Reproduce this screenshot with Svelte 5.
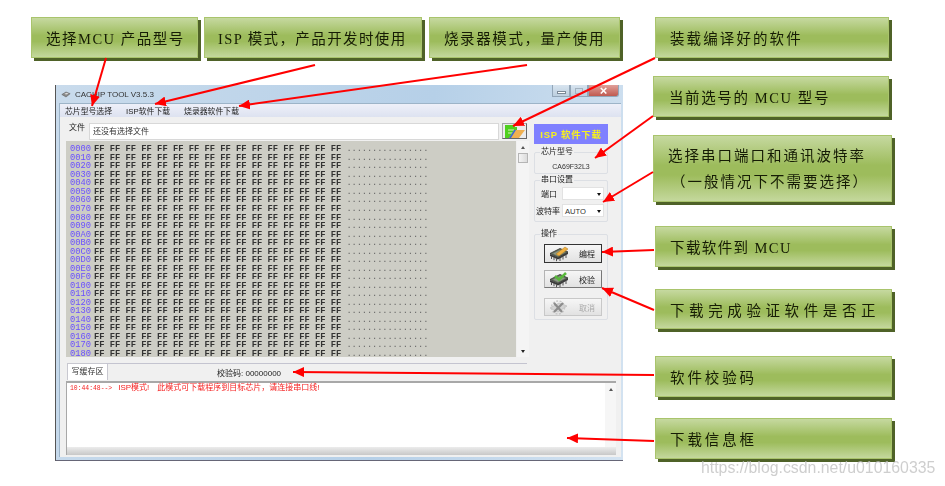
<script lang="ts">
  // Annotated screenshot of the ISP tool: a window on a free canvas with callouts and arrows around it.
  const callouts = [
    { x: 31, y: 17, w: 167, h: 41, px: 14, ls: 1.5, lines: ["选择MCU 产品型号"] },
    { x: 204, y: 17, w: 218, h: 41, px: 13, ls: 1.4, lines: ["ISP 模式，产品开发时使用"] },
    { x: 429, y: 17, w: 191, h: 41, px: 14, ls: 1.6, lines: ["烧录器模式，量产使用"] },
    { x: 655, y: 17, w: 234, h: 41, px: 14, ls: 2.1, lines: ["装载编译好的软件"] },
    { x: 653, y: 76, w: 236, h: 41, px: 15, ls: 1.6, lines: ["当前选号的 MCU 型号"] },
    { x: 653, y: 135, w: 239, h: 67, px: 14, ls: 2, lines: ["选择串口端口和通讯波特率", "（一般情况下不需要选择）"] },
    { x: 655, y: 226, w: 237, h: 41, px: 14, ls: 1.4, lines: ["下载软件到 MCU"] },
    { x: 655, y: 289, w: 237, h: 40, px: 14, ls: 4.6, lines: ["下载完成验证软件是否正"] },
    { x: 655, y: 356, w: 237, h: 41, px: 14, ls: 2.9, lines: ["软件校验码"] },
    { x: 655, y: 418, w: 237, h: 41, px: 14, ls: 2.9, lines: ["下载信息框"] },
  ];

  const arrows = [
    [106, 58, 92, 106],
    [315, 65, 155, 104],
    [527, 65, 239, 106],
    [655, 58, 513, 126],
    [653, 116, 595, 158],
    [653, 172, 603, 202],
    [654, 250, 602, 252],
    [654, 310, 602, 288],
    [654, 375, 293, 372],
    [654, 441, 567, 438],
  ];

  const hexRows = Array.from({ length: 25 }, (_, i) => (i * 16).toString(16).toUpperCase().padStart(4, "0"));
  const ffs = "FF ".repeat(16);
  const dots = ".".repeat(16);
</script>

{#snippet chip()}
  <path d="M2 8.5 12 3.5l8 3.5-10 5.5z" fill="#66725f" stroke="#2e2e2e" stroke-width=".8" />
  <path d="M5 8.5 12 5l5 2.2-7 3.8z" fill="#8e9888" />
  <path d="M2 9v2l8 3.5 10-5.5V7l-10 5.5z" fill="#3a3a3a" />
  <path d="M3.5 11v3M6 12.2v3M8.5 13.2v3M12 13v3M15 11.5v3M18 10v3" stroke="#555" stroke-width="1" />
{/snippet}

<div class="canvas">
  <div class="window">
    <div class="titlebar">
      <svg class="app-ico" width="10" height="9" viewBox="0 0 12 10">
        <path d="M1 5 6 2l5 2-5 4z" fill="#8a8a8a" stroke="#555" stroke-width=".6" />
        <path d="M4 4l3-1 2 1-3 1z" fill="#ddd" />
      </svg>
      <span class="title">CACHIP TOOL V3.5.3</span>
      <div class="caption">
        <span class="cap"><i class="min"></i></span>
        <span class="cap"><i class="max"></i></span>
        <span class="cap close">×</span>
      </div>
    </div>

    <div class="inner">
      <div class="menu">
        <span>芯片型号选择</span>
        <span>ISP软件下载</span>
        <span>烧录器软件下载</span>
      </div>

      <div class="body">
        <div class="top">
          <div class="left">
            <div class="file-row">
              <label for="file">文件</label>
              <div id="file" class="file-input">还没有选择文件</div>
              <button class="open-btn" aria-label="open">
                <svg width="20" height="13" viewBox="0 0 20 13">
                  <path d="M0 0h9l1 2h2v11H0z" fill="#4fd01e" />
                  <path d="M3 5h6M3 8h6" stroke="#d8f0c0" stroke-width="1" />
                  <path d="M4 13l5-8h11l-6 8z" fill="#f0b050" />
                  <path d="M4 13l5-8h2l-5 8z" fill="#3a6fd0" />
                </svg>
              </button>
            </div>
            <div class="hex-wrap">
              <div class="hex">
                {#each hexRows as addr}
                  <div class="hex-row"><span class="addr">{addr}</span><span>{ffs}</span><span class="dots">{dots}</span></div>
                {/each}
              </div>
              <div class="vscroll">
                <span class="up"></span>
                <span class="thumb"></span>
                <span class="down"></span>
              </div>
            </div>
          </div>

          <div class="right">
            <div class="isp-btn">ISP 软件下载</div>

            <div class="group chip">
              <span class="legend">芯片型号</span>
              <div class="chip-name">CA69F32L3</div>
            </div>

            <div class="group serial">
              <span class="legend">串口设置</span>
              <div class="field port"><span>端口</span><div class="select"></div></div>
              <div class="field baud"><span>波特率</span><div class="select">AUTO</div></div>
            </div>

            <div class="group ops">
              <span class="legend">操作</span>
              <button class="act focus">
                <svg width="22" height="17" viewBox="0 0 22 17">
                  {@render chip()}
                  <path d="M8 9l9-7 3 2-9 7z" fill="#f0b040" stroke="#a87820" stroke-width=".5" />
                </svg>
                <span>编程</span>
              </button>
              <button class="act">
                <svg width="22" height="17" viewBox="0 0 22 17">
                  {@render chip()}
                  <path d="M7 5l4 3.5L18 2" fill="none" stroke="#57b83a" stroke-width="2.6" />
                </svg>
                <span>校验</span>
              </button>
              <button class="act off">
                <svg width="22" height="17" viewBox="0 0 22 17">
                  <path d="M2 9l9-5 8 3-9 6z" fill="#d4d4d4" stroke="#bbb" stroke-width=".7" />
                  <circle cx="10" cy="8.5" r="6.5" fill="none" stroke="#c8c8c8" stroke-width="1.4" stroke-dasharray="2 1.5" />
                  <path d="M6 4l8 9M15 4 6 13" stroke="#8c8c8c" stroke-width="2.2" />
                </svg>
                <span>取消</span>
              </button>
            </div>
          </div>
        </div>

        <div class="tab-row">
          <div class="tab">写缓存区</div>
          <div class="checksum">校验码: <span>00000000</span></div>
        </div>

        <div class="log">
          <div class="log-main">
            <div class="log-text">
              <div class="log-line"><span class="time">10:44:48--&gt;</span><span class="mode">ISP模式!</span>此模式可下载程序到目标芯片，请连接串口线!</div>
            </div>
            <div class="log-scroll"><span class="up"></span></div>
          </div>
          <div class="hscroll"></div>
        </div>
      </div>
    </div>
  </div>

  {#each callouts as c}
    <div
      class="callout"
      class:two={c.lines.length > 1}
      style="left:{c.x}px;top:{c.y}px;width:{c.w}px;height:{c.h}px;padding-left:{c.px}px;letter-spacing:{c.ls}px"
    >
      {#each c.lines as line}<div>{line}</div>{/each}
    </div>
  {/each}

  <svg class="arrows" width="945" height="486" viewBox="0 0 945 486">
    <defs>
      <marker id="head" markerUnits="userSpaceOnUse" markerWidth="12" markerHeight="10" refX="11" refY="5" orient="auto">
        <path d="M0 0 11 5 0 10z" fill="#f00" />
      </marker>
    </defs>
    {#each arrows as [x1, y1, x2, y2]}
      <line {x1} {y1} {x2} {y2} stroke="#f00" stroke-width="2" marker-end="url(#head)" />
    {/each}
  </svg>

  <div class="watermark">https://blog.csdn.net/u010160335</div>
</div>

<style>
  :global(body) { margin: 0; background: #fff; }

  .canvas {
    position: relative; width: 945px; height: 486px; overflow: hidden; background: #fff;
    font-family: "Liberation Sans", "Noto Sans CJK SC", sans-serif;
  }

  /* callouts */
  .callout {
    position: absolute; box-sizing: border-box; display: flex; flex-direction: column; justify-content: center;
    border: 1.5px solid #a9c46c; box-shadow: 3px 3px 0 #4f6228;
    background: linear-gradient(#c6d9a0, #9dbc5c 45%, #9dbc5c 60%, #c4d89d);
    font-family: "Liberation Serif", "Noto Sans CJK SC", serif; font-size: 14.5px; color: #161c05;
    white-space: nowrap; filter: blur(0.3px);
  }
  .callout.two { line-height: 26px; }
  .callout.two div + div { padding-left: 3px; }

  .arrows { position: absolute; inset: 0; pointer-events: none; }

  .watermark {
    position: absolute; left: 701px; top: 459px; font-size: 15.85px;
    color: rgba(190, 190, 190, 0.75); white-space: nowrap;
  }

  /* window */
  .window {
    position: absolute; left: 55px; top: 85px; width: 568px; height: 376px; box-sizing: border-box;
    display: flex; flex-direction: column; padding: 0 2px 4px 3px;
    border-left: 1px solid #555; border-bottom: 1px solid #667;
    background: linear-gradient(100deg, #c9dbec, #b6d0e8 60%, #d4e3f1);
    font-size: 8px; color: #222; filter: blur(0.3px);
  }
  .titlebar { height: 18px; flex: none; display: flex; align-items: center; padding-left: 2px; gap: 4px; }
  .title { font-size: 8px; color: #333; }
  .caption { margin: 0 2px 0 auto; display: flex; align-self: flex-start; }
  .cap {
    width: 18px; height: 12px; box-sizing: border-box; display: flex; align-items: center; justify-content: center;
    border: 1px solid #93a6b8; border-top: 0; background: linear-gradient(#d8e4ef, #bccfdf);
  }
  .cap .min { width: 7px; height: 1px; margin-top: 3px; background: #fff; border: 1px solid #7c8a98; }
  .cap .max { width: 6px; height: 4px; border: 1px solid #a4b2c0; }
  .cap.close {
    width: 31px; color: #fff; font-size: 13px; font-weight: 700; border-radius: 0 0 3px 0;
    background: linear-gradient(#e0a09a, #c05a50);
  }

  .inner {
    flex: 1; display: flex; flex-direction: column; background: #f0f0f0;
    border: 1px solid #9db4c8; border-width: 1px 0 0 1px;
  }
  .menu {
    height: 13px; flex: none; display: flex; align-items: center; padding-left: 5px; gap: 14px;
    background: linear-gradient(#eef0f9, #dde2f0); font-size: 7.85px;
  }

  .body { flex: 1; display: flex; flex-direction: column; padding: 0 5px 2px 6px; }
  .top { height: 246px; flex: none; display: flex; gap: 5px; }
  .left { width: 463px; display: flex; flex-direction: column; }

  .file-row { height: 24px; flex: none; display: flex; align-items: flex-end; padding-bottom: 1px; box-sizing: border-box; }
  .file-row label { width: 23px; padding: 0 0 8px 3px; box-sizing: border-box; }
  .file-input {
    width: 410px; height: 17px; box-sizing: border-box; background: #fff; padding: 3px 0 0 3px;
    border: 1px solid #d8d8d8; line-height: 10px; color: #333;
  }
  .open-btn {
    width: 25px; height: 16px; margin: 0 0 1px 3px; padding: 0; display: flex; align-items: center; justify-content: center;
    background: #ececec; border: 1px solid #a8a8a8; border-right-color: #666; border-bottom-color: #666;
  }

  .hex-wrap { height: 216px; flex: none; display: flex; gap: 1px; }
  .hex {
    width: 450px; height: 216px; box-sizing: border-box; overflow: hidden; padding-top: 4.4px; background: #cdcdc5;
    font-family: "Liberation Mono", monospace; font-size: 8.78px; font-weight: 700; color: #333;
  }
  .hex-row { height: 8.53px; line-height: 8.53px; white-space: pre; display: flex; }
  .addr { width: 28px; padding-left: 4px; box-sizing: border-box; color: #6a50ff; font-weight: 400; }
  .dots { font-weight: 400; letter-spacing: -0.15px; color: #666; }
  .vscroll { width: 12px; display: flex; flex-direction: column; align-items: center; background: #f4f4f4; }
  .up { width: 0; height: 0; margin-top: 5px; border: 2.5px solid transparent; border-top: 0; border-bottom: 3px solid #555; }
  .thumb {
    width: 10px; height: 10px; box-sizing: border-box; margin-top: 4px;
    border: 1px solid #b5b5b5; background: linear-gradient(90deg, #f4f4f4, #dcdcdc);
  }
  .down { width: 0; height: 0; margin-top: auto; margin-bottom: 4px; border: 2.5px solid transparent; border-bottom: 0; border-top: 3px solid #222; }

  .right { width: 75px; flex: none; display: flex; flex-direction: column; padding-top: 7px; }
  .isp-btn {
    height: 20px; width: 74px; flex: none; display: flex; align-items: center; justify-content: center;
    background: #7f80ff; color: #f7f01e; font-size: 9.4px; font-weight: 700; letter-spacing: 0.8px; white-space: nowrap;
  }
  .group { border: 1px solid #dcdfe4; border-radius: 2px; box-sizing: border-box; width: 74px; }
  .legend { display: block; width: fit-content; margin: -6px 0 0 5px; padding: 0 1px; background: #f0f0f0; line-height: 10px; color: #222; }
  .chip { height: 22px; margin-top: 8px; }
  .chip-name { text-align: center; line-height: 10px; margin-top: 5px; color: #333; font-size: 7px; }
  .serial { height: 42px; margin-top: 6px; }
  .field { display: flex; align-items: center; justify-content: flex-end; padding-right: 3px; height: 13px; }
  .port { margin-top: 2px; }
  .port span { margin-right: 5px; }
  .baud { margin-top: 4px; }
  .baud span { margin-right: 2px; white-space: nowrap; }
  .select {
    width: 42px; height: 13px; box-sizing: border-box; background: #fff; position: relative; padding-left: 2px;
    line-height: 13px; color: #333; font-size: 7.6px; border: 1px solid #e2e2e2;
  }
  .select::after {
    content: ""; position: absolute; right: 2px; top: 5px; width: 0; height: 0;
    border: 2.5px solid transparent; border-bottom: 0; border-top: 3px solid #111;
  }
  .ops { height: 86px; margin-top: 12px; display: flex; flex-direction: column; padding-left: 9px; }
  .ops .legend { margin-left: -4px; }
  .act {
    width: 58px; height: 18px; flex: none; padding: 0 0 0 3px; margin-top: 7px; display: flex; align-items: center; gap: 9px;
    box-sizing: border-box; background: linear-gradient(#f6f6f6, #e2e2e2); border: 1px solid #b4b4b4; border-right-color: #777; border-bottom-color: #777;
    font-family: inherit; font-size: 8px; color: #222;
  }
  .act.focus { margin-top: 5px; height: 19px; border: 1px solid #333; }
  .act.off { color: #aaa; border-color: #c8c8c8; margin-top: 10px; }

  .tab-row { height: 18px; flex: none; position: relative; display: flex; }
  .tab-row::before {
    content: ""; position: absolute; left: 40px; top: 0; width: 421px; height: 1px; background: #c4c4d0;
  }
  .tab {
    width: 41px; height: 17px; margin-left: 1px; box-sizing: border-box; background: #fff; text-align: center;
    border: 1px solid #c8c8d0; border-bottom: 0; line-height: 15px; color: #333;
  }
  .checksum { margin: 6px 0 0 109px; line-height: 10px; color: #222; }

  .log {
    width: 550px; height: 74px; box-sizing: border-box; display: flex; flex-direction: column; background: #fff;
    border-top: 2px solid #a8a8a8; border-left: 1.5px solid #a8a8a8;
  }
  .log-main { flex: 1; display: flex; min-height: 0; }
  .log-text { flex: 1; padding: 0 0 0 3px; }
  .log-line { color: #f52020; font-size: 8px; line-height: 10px; white-space: pre; }
  .time { font-family: "Liberation Mono", monospace; font-size: 6.4px; margin-right: 6px; }
  .mode { margin-right: 8px; }
  .log-scroll { width: 11px; display: flex; justify-content: center; align-items: flex-start; background: #f6f6f6; }
  .hscroll { height: 8px; flex: none; background: linear-gradient(#ececec, #c8c8c8); }
</style>
